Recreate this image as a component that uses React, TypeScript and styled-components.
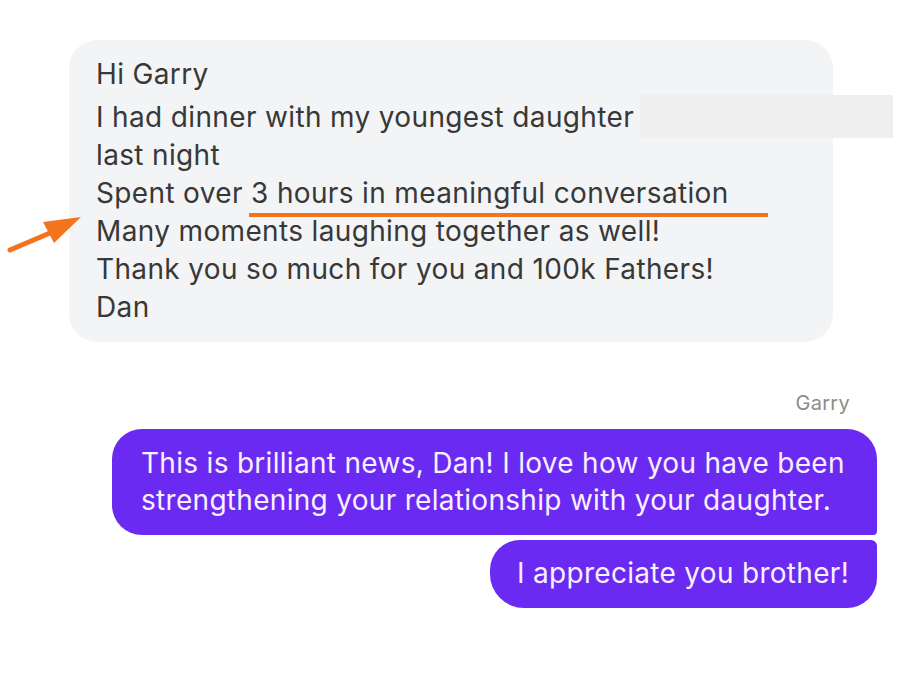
import React from 'react';
import styled, { createGlobalStyle } from 'styled-components';

const GlobalStyle = createGlobalStyle`
  body {
    margin: 0;
    background: #ffffff;
    font-family: Inter, "Noto Sans", sans-serif;
  }
`

const Page = styled.div`
  position: relative;
  width: 900px;
  height: 676px;
  padding-top: 40px;
  box-sizing: border-box;
  overflow: hidden;
`

const Incoming = styled.div`
  margin-left: 69px;
  width: 764px;
  box-sizing: border-box;
  padding: 15px 27px 16px;
  background: #f3f4f6;
  border-radius: 28px;
  color: #383838;
  font-size: 28px;
  line-height: 38px;
  letter-spacing: 0.35px;
`

const Line = styled.div<{ $gap?: number }>`
  white-space: nowrap;
  margin-bottom: ${p => p.$gap || 0}px;
`

const Redacted = styled.span`
  display: inline-block;
  width: 253px;
  height: 43px;
  margin: -3px 0 -2px 6px;
  vertical-align: top;
  background: #efefef;
`

const Marked = styled.span`
  position: relative;

  &::after {
    content: '';
    position: absolute;
    left: -2px;
    right: -39px;
    bottom: -7px;
    height: 4px;
    background: #f4731f;
  }
`

const Arrow = styled.svg`
  position: absolute;
  left: 6px;
  top: 212px;
`

const Outgoing = styled.div`
  display: flex;
  flex-direction: column;
  align-items: flex-end;
  padding-right: 23px;
  margin-top: 51px;
`

const Sender = styled.div`
  color: #8c8c8c;
  font-size: 20px;
  line-height: 20px;
  letter-spacing: 0.3px;
  margin-right: 27px;
  margin-bottom: 16px;
`

const Bubble = styled.div<{ $first?: boolean }>`
  width: ${p => (p.$first ? '765px' : 'auto')};
  box-sizing: border-box;
  padding: ${p => (p.$first ? '16px 20px 16px 29px' : '15px 28px 16px 27px')};
  background: #6b2af2;
  color: #f8f0ff;
  font-size: 28px;
  line-height: 37px;
  letter-spacing: 0.3px;
  border-radius: ${p => (p.$first ? '30px 30px 4px 30px' : '30px 6px 30px 34px')};
  margin-bottom: 5px;
`

export default function App() {
  return (
    <Page>
      <GlobalStyle />
      <Incoming>
        <Line $gap={5}>Hi Garry</Line>
        <Line>I had dinner with my youngest daughter<Redacted /></Line>
        <Line>last night</Line>
        <Line>Spent over <Marked>3 hours in meaningful conversation</Marked></Line>
        <Line>Many moments laughing together as well!</Line>
        <Line>Thank you so much for you and 100k Fathers!</Line>
        <Line>Dan</Line>
      </Incoming>
      <Arrow width="80" height="44" viewBox="0 0 80 44">
        <line x1="4" y1="38" x2="44" y2="21" stroke="#f4731f" strokeWidth="5" strokeLinecap="round" />
        <polygon points="75,5 37,10 48,31" fill="#f4731f" />
      </Arrow>
      <Outgoing>
        <Sender>Garry</Sender>
        <Bubble $first>
          This is brilliant news, Dan! I love how you have been strengthening your relationship with your daughter.
        </Bubble>
        <Bubble>I appreciate you brother!</Bubble>
      </Outgoing>
    </Page>
  );
}
